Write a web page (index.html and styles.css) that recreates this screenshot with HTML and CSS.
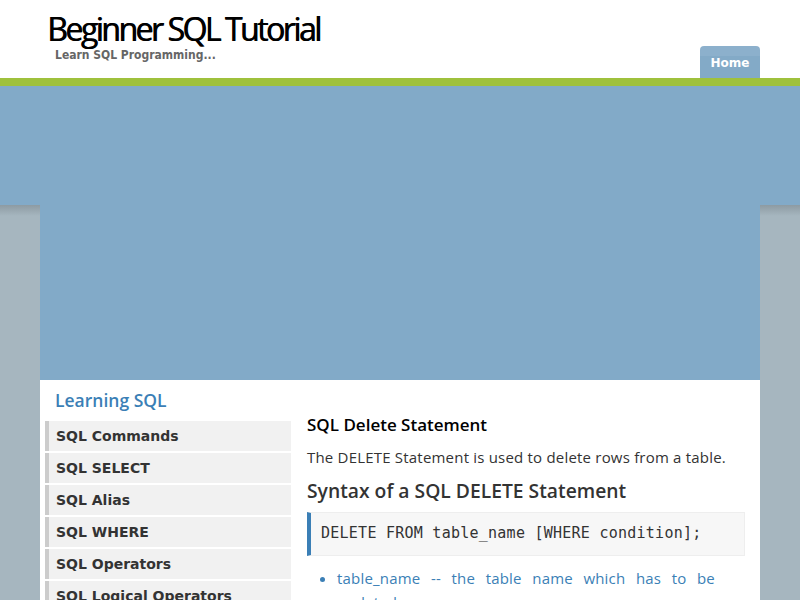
FILE: index.html
```html
<!DOCTYPE html>
<html>
<head>
<meta charset="utf-8">
<title>Beginner SQL Tutorial</title>
<link rel="stylesheet" href="styles.css">
</head>
<body>
<div class="page">
  <header class="header">
    <div class="brand">
      <h1 class="title">Beginner SQL Tutorial</h1>
      <div class="tagline">Learn SQL Programming...</div>
    </div>
    <nav class="nav"><a class="tab" href="#">Home</a></nav>
  </header>
  <div class="hero"></div>
  <div class="content">
    <aside class="sidebar">
      <h3 class="side-title">Learning SQL</h3>
      <ul class="menu">
        <li><a href="#">SQL Commands</a></li>
        <li><a href="#">SQL SELECT</a></li>
        <li><a href="#">SQL Alias</a></li>
        <li><a href="#">SQL WHERE</a></li>
        <li><a href="#">SQL Operators</a></li>
        <li><a href="#">SQL Logical Operators</a></li>
      </ul>
    </aside>
    <main class="main">
      <h3 class="h3">SQL Delete Statement</h3>
      <p class="para">The DELETE Statement is used to delete rows from a table.</p>
      <h2 class="h2">Syntax of a SQL DELETE Statement</h2>
      <pre class="code">DELETE FROM table_name [WHERE condition];</pre>
      <ul class="list">
        <li>table_name -- the table name which has to be updated.</li>
      </ul>
    </main>
  </div>
</div>
</body>
</html>
```
FILE: styles.css
```css
html, body { margin: 0; padding: 0; }
body {
  background-color: #a6b6bf;
  background-image: linear-gradient(to bottom, #ffffff 0, #ffffff 78px, #9fc13c 78px, #9fc13c 86px, #82aac8 86px, #82aac8 205px, #8d9ba3 205px, #a6b6bf 216px);
  background-repeat: no-repeat;
  background-size: 100% 216px;
  font-family: "Open Sans", "Liberation Sans", sans-serif;
  color: #333;
  height: 600px;
  overflow: hidden;
}
.page { width: 720px; margin: 0 auto; }
.header { height: 78px; display: flex; justify-content: space-between; align-items: flex-end; }
.brand { padding-left: 7px; align-self: flex-start; }
.title {
  margin: 12px 0 0 0;
  font-family: "Open Sans", sans-serif;
  font-weight: 400;
  font-size: 32px;
  line-height: 34px;
  letter-spacing: -2.5px;
  color: #000;
  text-shadow: 0.7px 0 0 #000;
}
.tagline {
  margin: 3px 0 0 8px;
  font-family: "DejaVu Sans Condensed", "DejaVu Sans", sans-serif;
  font-stretch: condensed;
  font-weight: 700;
  font-size: 12px;
  line-height: 12px;
  color: #666;
}
.nav { display: flex; }
.tab {
  display: block;
  width: 60px;
  height: 32px;
  line-height: 35px;
  text-align: center;
  background: linear-gradient(to bottom, #8cb0cc 0, #8cb0cc 10px, #83aac7 10px);
  border-radius: 4px 4px 0 0;
  color: #fff;
  font-family: "DejaVu Sans", sans-serif;
  font-weight: 700;
  font-size: 12px;
  text-decoration: none;
}
.hero { height: 294px; background: #82aac8; margin-top: 8px; }
.content { background: #fff; display: flex; height: 220px; }
.sidebar { width: 246px; padding-left: 5px; }
.side-title {
  margin: 8px 0 0 10px;
  font-size: 17.5px;
  line-height: 24px;
  font-weight: 600;
  color: #3b7fb6;
}
.menu { list-style: none; margin: 9px 0 0 0; padding: 0; }
.menu li { margin-bottom: 2px; }
.menu a {
  display: block;
  height: 30px;
  line-height: 31px;
  background: #f1f1f1;
  border-left: 4px solid #cccccc;
  padding-left: 7px;
  font-family: "DejaVu Sans", sans-serif;
  font-weight: 700;
  font-size: 14px;
  color: #333;
  text-decoration: none;
}
.main { width: 438px; margin-left: 16px; }
.h3 {
  margin: 33px 0 0 0;
  font-size: 17px;
  line-height: 24px;
  font-weight: 600;
  color: #000;
}
.para { margin: 9px 0 0 0; font-size: 15px; line-height: 22px; letter-spacing: 0.2px; color: #333; }
.h2 { margin: 10px 0 0 0; font-size: 19.3px; line-height: 26px; font-weight: 600; color: #333; }
.code {
  margin: 8px 0 0 0;
  background: #f7f7f7;
  border: 1px solid #eeeeee;
  border-left: 4px solid #3b7fb6;
  padding: 9px 10px 11px 10px;
  font-family: "DejaVu Sans Mono", monospace;
  font-size: 15px;
  line-height: 22px;
  letter-spacing: 0.25px;
  color: #333;
}
.list { margin: 10px 0 0 0; padding: 0 30px 0 30px; color: #3b7fb6; }
.list li { font-size: 15px; line-height: 24px; text-align: justify; letter-spacing: 0.2px; }
```
